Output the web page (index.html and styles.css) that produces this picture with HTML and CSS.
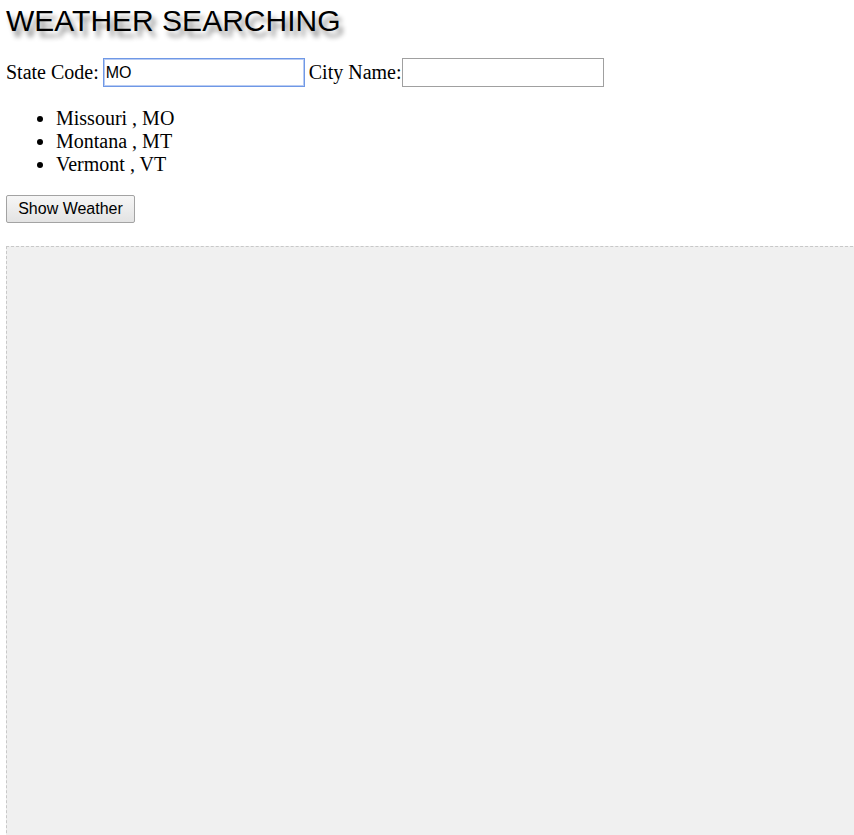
FILE: index.html
```html
<!DOCTYPE html>
<html>
<head>
<meta charset="utf-8">
<link rel="stylesheet" href="styles.css">
</head>
<body>
<h1 class="title">WEATHER SEARCHING</h1>
<div class="form-row">
  <label class="lbl">State Code:</label>
  <input class="field field-focus" type="text" value="MO">
  <label class="lbl lbl-city">City Name:</label><input class="field" type="text">
</div>
<ul class="states">
  <li>Missouri , MO</li>
  <li>Montana , MT</li>
  <li>Vermont , VT</li>
</ul>
<button class="btn">Show Weather</button>
<div class="result"></div>
</body>
</html>
```
FILE: styles.css
```css
html, body {
  margin: 0;
  padding: 0;
}
body {
  padding: 6px;
  font-family: "Liberation Serif", "Times New Roman", serif;
  font-size: 20px;
  color: #000;
  background: #fff;
  overflow: hidden;
  height: 835px;
  box-sizing: border-box;
}
.title {
  margin: 0;
  font-family: "Liberation Sans", Arial, sans-serif;
  font-weight: normal;
  font-size: 30px;
  line-height: 32px;
  margin-top: -1px;
  text-shadow: 4px 6px 5px rgba(0,0,0,0.45);
}
.form-row {
  margin-top: 21px;
  display: flex;
  align-items: center;
  height: 29px;
}
.lbl {
  margin-right: 4px;
}
.lbl-city {
  margin-left: 4px;
  margin-right: 0;
}
.field {
  box-sizing: border-box;
  width: 202px;
  height: 29px;
  border: 1px solid #a0a0a0;
  padding: 1px 2px;
  font-family: "Liberation Sans", Arial, sans-serif;
  font-size: 16px;
  margin: 0;
  outline: none;
}
.field-focus {
  border: 1px solid #6f98e6;
  box-shadow: 0 0 0 1px #b9ccf3 inset;
}
.states {
  margin: 20px 0 0 0;
  padding-left: 50px;
  line-height: 23px;
}
.btn {
  margin-top: 19px;
  display: block;
  width: 129px;
  height: 28px;
  font-family: "Liberation Sans", Arial, sans-serif;
  font-size: 16px;
  color: #000;
  background: linear-gradient(#f6f6f6, #e3e3e3);
  border: 1px solid #a3a3a3;
  border-radius: 2px;
  padding: 0;
}
.result {
  margin-top: 23px;
  border: 1px dashed #c8c8c8;
  background: #f0f0f0;
  height: 700px;
  margin-right: -20px;
}
```
